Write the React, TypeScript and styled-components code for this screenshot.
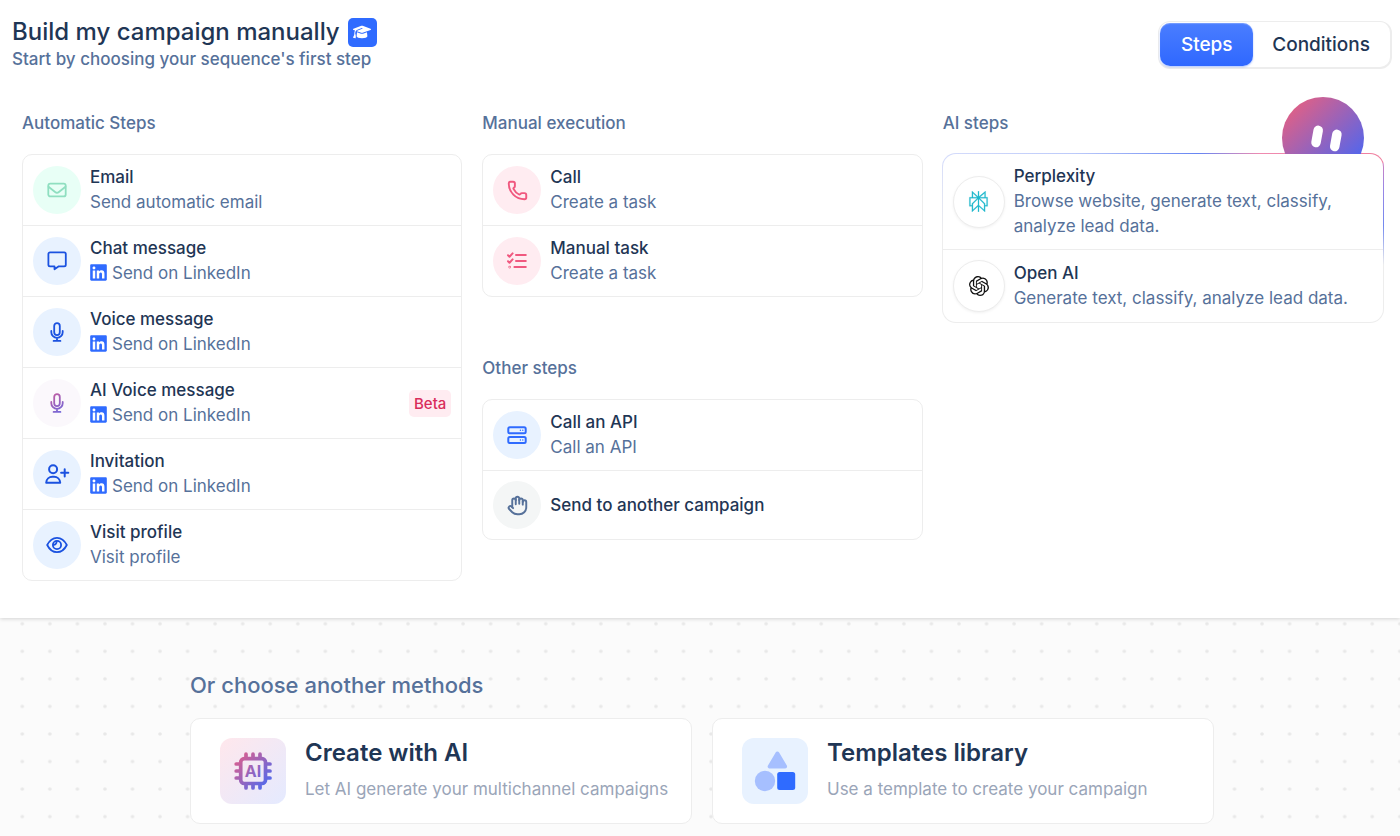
import React, { useState } from "react";
import styled, { createGlobalStyle, css } from "styled-components";
import { Hand, Phone } from "lucide-react";
import { FaGraduationCap, FaLinkedin } from "react-icons/fa6";
import { SiOpenai, SiPerplexity } from "react-icons/si";

const colors = {
  ink: "#1f3655",
  muted: "#56719a",
  faint: "#9aa5b8",
  line: "#ededed",
  primary: "#2f6bff",
};

const GlobalStyle = createGlobalStyle`
  *, *::before, *::after { box-sizing: border-box; }
  body {
    margin: 0;
    background: #fbfbfb;
    color: ${colors.ink};
    font-family: Inter, "Liberation Sans", sans-serif;
    font-size: 17px;
    line-height: 25px;
  }
  h1, h2, h3, p, ul { margin: 0; padding: 0; }
  button { font: inherit; color: inherit; cursor: pointer; }
`;

const Page = styled.div`
  display: flex;
  flex-direction: column;
  min-height: 100vh;
`;

const Panel = styled.main`
  position: relative;
  z-index: 1;
  padding-bottom: 37px;
  background: #fff;
  box-shadow: 0 1px 4px rgba(0, 0, 0, 0.16);
`;

const Header = styled.header`
  display: flex;
  justify-content: space-between;
  align-items: flex-start;
  padding: 17px 8px 0 12px;
`;

const TitleRow = styled.div`
  display: flex;
  align-items: center;
  gap: 8px;
`;

const Title = styled.h1`
  font-size: 24px;
  font-weight: 500;
  line-height: 30px;
`;

const HelpButton = styled.button`
  display: grid;
  place-items: center;
  width: 29px;
  height: 29px;
  padding: 0;
  border: 0;
  border-radius: 5px;
  background: ${colors.primary};
  color: #fff;
`;

const Subtitle = styled.p`
  font-weight: 500;
  color: ${colors.muted};
`;

const Toggle = styled.div`
  display: flex;
  margin-top: 4px;
  padding: 1px;
  border: 2px solid ${colors.line};
  border-width: 1px 2px 2px 1px;
  border-radius: 12px;
  background: #fff;
`;

const ToggleButton = styled.button<{ $active: boolean }>`
  min-width: 93px;
  height: 43px;
  padding: 0 19px;
  border: 0;
  border-radius: 10px;
  background: transparent;
  font-size: 19px;
  font-weight: 500;
  ${(p) =>
    p.$active &&
    css`
      background: linear-gradient(#4a7dff, #2f68ff);
      box-shadow: inset 0 1px 1px rgba(255, 255, 255, 0.25), 0 1px 2px rgba(47, 104, 255, 0.4);
      color: #fff;
    `}
`;

const Columns = styled.div`
  display: grid;
  grid-template-columns: repeat(3, minmax(0, 1fr));
  gap: 20px;
  align-items: start;
  padding: 25px 17px 0 22px;
`;

const Column = styled.div`
  display: flex;
  flex-direction: column;
`;

const Group = styled.section`
  & + & { margin-top: 45px; }
`;

const GroupHeader = styled.div`
  display: flex;
  justify-content: space-between;
  align-items: flex-end;
  min-height: 57px;
  padding-right: 19px;
`;

const GroupTitle = styled.h2`
  padding-bottom: 18px;
  font-size: 17px;
  font-weight: 500;
  color: ${colors.muted};
`;

const StepList = styled.ul<{ $glow?: boolean }>`
  list-style: none;
  border: 1px solid ${colors.line};
  border-radius: 10px;
  background: #fff;
  ${(p) =>
    p.$glow &&
    css`
      margin: -1px;
      border-color: transparent;
      border-radius: 14px;
      background:
        linear-gradient(#fff, #fff) padding-box,
        linear-gradient(90deg, #d5dcfb, #bccafa 30%, #6685f3 58%, #ef8bb0 72%, #f07f9f 97%) border-box left top / 100% 10px no-repeat,
        linear-gradient(#e57fb0, #9c86e4 30%, #7389ef 65%, ${colors.line}) border-box right top / 12px 112px no-repeat,
        linear-gradient(#d5dcfb, ${colors.line}) border-box left top / 12px 80px no-repeat,
        linear-gradient(${colors.line}, ${colors.line}) border-box;
    `}
`;

const StepItem = styled.li`
  & + & { border-top: 1px solid ${colors.line}; }
`;

const StepButton = styled.button`
  display: flex;
  align-items: center;
  gap: 9px;
  width: 100%;
  padding: 10px;
  border: 0;
  background: none;
  text-align: left;
`;

const tones = {
  green: { bg: "#e8fff6", fg: "#8fdfc0" },
  blue: { bg: "#e8f2ff", fg: "#1b52e0" },
  azure: { bg: "#e8f2ff", fg: "#2f6bff" },
  violet: { bg: "#fbf8fc", fg: "#9a63c0" },
  red: { bg: "#ffecf1", fg: "#f0587f" },
  grey: { bg: "#f4f6f6", fg: "#56719a" },
  teal: { bg: "#fff", fg: "#20b8cd" },
  black: { bg: "#fff", fg: "#111" },
};

type Tone = keyof typeof tones;

const StepIcon = styled.span<{ $tone: Tone; $ring?: boolean }>`
  display: grid;
  place-items: center;
  flex: none;
  width: ${(p) => (p.$ring ? 52 : 48)}px;
  height: ${(p) => (p.$ring ? 52 : 48)}px;
  border-radius: 50%;
  border: ${(p) => (p.$ring ? `1px solid ${colors.line}` : "0")};
  box-shadow: ${(p) => (p.$ring ? "0 1px 3px rgba(0, 0, 0, 0.06)" : "none")};
  background: ${(p) => tones[p.$tone].bg};
  color: ${(p) => tones[p.$tone].fg};
`;

const StepText = styled.span`
  display: flex;
  flex-direction: column;
  flex: 1;
  min-width: 0;
`;

const StepName = styled.span`
  font-weight: 500;
`;

const StepNote = styled.span`
  display: flex;
  align-items: center;
  gap: 5px;
  color: ${colors.muted};
`;

const LinkedInMark = styled(FaLinkedin)`
  flex: none;
  width: 17px;
  height: 19px;
  margin-bottom: 2px;
  color: ${colors.primary};
`;

const Badge = styled.span`
  padding: 1px 5px;
  border-radius: 5px;
  background: #ffecf1;
  color: #d92d5b;
  font-size: 15px;
  font-weight: 500;
`;

const Methods = styled.section`
  display: grid;
  flex: 1;
  background: #fbfbfb;
  & > * { grid-area: 1 / 1; }
`;

const Dots = styled.svg`
  width: 100%;
  height: 100%;
  min-height: 0;
`;

const MethodsBody = styled.div`
  z-index: 1;
  justify-self: center;
  width: 100%;
  max-width: 1028px;
  padding: 52px 0 12px 4px;
`;

const MethodsTitle = styled.h2`
  margin-bottom: 18px;
  font-size: 22px;
  font-weight: 500;
  line-height: 30px;
  color: ${colors.muted};
`;

const MethodGrid = styled.div`
  display: grid;
  grid-template-columns: repeat(2, minmax(0, 1fr));
  gap: 20px;
`;

const MethodCard = styled.button`
  display: flex;
  align-items: center;
  gap: 19px;
  padding: 19px 12px 19px 29px;
  border: 1px solid ${colors.line};
  border-radius: 10px;
  background: #fff;
  text-align: left;
`;

const MethodIcon = styled.span<{ $gradient?: boolean }>`
  flex: none;
  width: 66px;
  height: 66px;
  border-radius: 12px;
  background: ${(p) => (p.$gradient ? "linear-gradient(135deg, #ffe7ec, #e4eaff)" : "#e8f2ff")};
  & > svg { display: block; }
`;

const MethodText = styled.span`
  display: flex;
  flex-direction: column;
  gap: 9px;
  padding-bottom: 2px;
`;

const MethodName = styled.span`
  font-size: 24px;
  font-weight: 600;
  line-height: 30px;
`;

const MethodNote = styled.span`
  color: ${colors.faint};
`;

const Line = ({
  children,
  stroke = "currentColor",
  weight = 1.8,
}: {
  children: React.ReactNode;
  stroke?: string;
  weight?: number;
}) => (
  <svg
    width="24"
    height="24"
    viewBox="0 0 24 24"
    fill="none"
    stroke={stroke}
    strokeWidth={weight}
    strokeLinecap="round"
    strokeLinejoin="round"
    overflow="visible"
    aria-hidden
  >
    {children}
  </svg>
);

const MailIcon = () => (
  <Line>
    <rect x="3.3" y="5.6" width="17.4" height="12.8" rx="2" />
    <path d="M3.5 8.8l6.6 5.2a3 3 0 0 0 3.8 0l6.6-5.2" />
  </Line>
);

const ChatIcon = () => (
  <Line>
    <path d="M5 3.3h14.2a1.6 1.6 0 0 1 1.6 1.6v10.8a1.6 1.6 0 0 1-1.6 1.6h-5.4l-4.3 3v-3H5a1.6 1.6 0 0 1-1.6-1.6V4.9a1.6 1.6 0 0 1 1.6-1.6z" />
  </Line>
);

const micPaths = (
  <>
    <rect x="9.2" y="3.1" width="5.6" height="12" rx="2.8" />
    <path d="M6.3 11v1.2a5.7 5.7 0 0 0 11.4 0V11M12 17.900v3M8.6 20.900h6.8" />
  </>
);

const MicIcon = () => <Line>{micPaths}</Line>;

const AiMicIcon = () => (
  <Line stroke="url(#mic-tint)">
    <defs>
      <linearGradient id="mic-tint" gradientUnits="userSpaceOnUse" x1="5" y1="2" x2="19" y2="22">
        <stop stopColor="#c85a9c" />
        <stop offset="1" stopColor="#6a6ae0" />
      </linearGradient>
    </defs>
    {micPaths}
  </Line>
);

const InviteIcon = () => (
  <Line weight={2}>
    <circle cx="8.1" cy="7.2" r="4" />
    <path d="M1.2 20.7c.2-3.5 2.9-6 6.2-6h1.6c3.3 0 6 2.5 6.2 6zM19.7 7.2v7.2M16.1 10.8h7.2" />
  </Line>
);

const EyeIcon = () => (
  <Line>
    <path d="M2.2 12C4.2 8 7.5 4.8 12 4.8S19.8 8 21.8 12C19.8 16 16.5 19.2 12 19.2S4.2 16 2.2 12z" />
    <circle cx="12" cy="12" r="4.1" />
    <path d="M11.6 8.6a3 3 0 0 1-3 3.2" />
  </Line>
);

const TaskIcon = () => (
  <Line weight={2}>
    <path d="M3 6.2l1.5 1.5L7.6 4.4M3 12.2l1.5 1.5 3.1-3.3M11 6.1h9.8M11 12.1h9.8M9.4 18.1h11.4" />
    <circle cx="4.7" cy="18.1" r=".3" />
  </Line>
);

const ServerIcon = () => (
  <Line weight={2}>
    <rect x="3.3" y="4.2" width="17.4" height="6.1" rx="1.5" />
    <rect x="3.3" y="13.9" width="17.4" height="6.1" rx="1.5" />
    <path d="M15.4 7.25h.01M17.8 7.25h.01M15.4 16.95h.01M17.8 16.95h.01" strokeWidth="1.4" />
  </Line>
);

const Robot = () => (
  <svg width="82" height="57" viewBox="0 0 82 57" aria-hidden>
    <defs>
      <linearGradient id="robot-fill" gradientUnits="userSpaceOnUse" x1="14" y1="8" x2="72" y2="68">
        <stop stopColor="#dc6089" />
        <stop offset="1" stopColor="#5066ee" />
      </linearGradient>
    </defs>
    <circle cx="41" cy="41" r="41" fill="url(#robot-fill)" />
    <path d="M36.2 33.3l-2.2 12.2M54.9 37.3l-2.2 12.2" stroke="#fff" strokeWidth="9.5" strokeLinecap="round" />
  </svg>
);

const ChipIcon = () => (
  <svg width="66" height="66" viewBox="0 0 66 66" role="img" aria-label="AI">
    <defs>
      <linearGradient id="chip-tint" gradientUnits="userSpaceOnUse" x1="16" y1="18" x2="50" y2="50">
        <stop stopColor="#df5e8b" />
        <stop offset="1" stopColor="#466bf5" />
      </linearGradient>
    </defs>
    <g fill="none" stroke="url(#chip-tint)" strokeWidth="3.7" strokeLinecap="round">
      <rect x="20.7" y="20.7" width="24.8" height="24.8" rx="3.5" />
      <path d="M26 16.2v3M33 16.2v3M40 16.2v3M26 47v3M33 47v3M40 47v3M16.2 26h3M16.2 33h3M16.2 40h3M47 26h3M47 33h3M47 40h3" />
    </g>
    <text x="33" y="39" textAnchor="middle" fontFamily="Inter, sans-serif" fontSize="16" fontWeight="700" fill="url(#chip-tint)">
      AI
    </text>
  </svg>
);

const ShapesIcon = () => (
  <svg width="66" height="66" viewBox="0 0 66 66" aria-hidden>
    <path d="M35.4 15.5L27.7 28.5H43.1z" fill="#a6bfff" stroke="#a6bfff" strokeWidth="4" strokeLinejoin="round" />
    <circle cx="23" cy="43" r="10.2" fill="#a6bfff" />
    <rect x="35.2" y="34" width="18" height="18" rx="2.5" fill="#2f6bff" />
  </svg>
);

type Step = {
  name: string;
  note?: string;
  tone: Tone;
  icon: React.ReactNode;
  linkedin?: boolean;
  ring?: boolean;
  badge?: string;
};

const automatic: Step[] = [
  { name: "Email", note: "Send automatic email", tone: "green", icon: <MailIcon /> },
  { name: "Chat message", note: "Send on LinkedIn", linkedin: true, tone: "blue", icon: <ChatIcon /> },
  { name: "Voice message", note: "Send on LinkedIn", linkedin: true, tone: "blue", icon: <MicIcon /> },
  { name: "AI Voice message", note: "Send on LinkedIn", linkedin: true, tone: "violet", icon: <AiMicIcon />, badge: "Beta" },
  { name: "Invitation", note: "Send on LinkedIn", linkedin: true, tone: "blue", icon: <InviteIcon /> },
  { name: "Visit profile", note: "Visit profile", tone: "blue", icon: <EyeIcon /> },
];

const manual: Step[] = [
  { name: "Call", note: "Create a task", tone: "red", icon: <Phone size={21} strokeWidth={2.2} /> },
  { name: "Manual task", note: "Create a task", tone: "red", icon: <TaskIcon /> },
];

const other: Step[] = [
  { name: "Call an API", note: "Call an API", tone: "azure", icon: <ServerIcon /> },
  { name: "Send to another campaign", tone: "grey", icon: <Hand size={21} strokeWidth={2.2} /> },
];

const ai: Step[] = [
  {
    name: "Perplexity",
    note: "Browse website, generate text, classify, analyze lead data.",
    tone: "teal",
    ring: true,
    icon: <SiPerplexity size={21} stroke="currentColor" strokeWidth={0.3} />,
  },
  {
    name: "Open AI",
    note: "Generate text, classify, analyze lead data.",
    tone: "black",
    ring: true,
    icon: <SiOpenai size={20} />,
  },
];

const StepGroup = ({ title, steps, glow }: { title: string; steps: Step[]; glow?: boolean }) => (
  <Group>
    <GroupHeader>
      <GroupTitle>{title}</GroupTitle>
      {glow && <Robot />}
    </GroupHeader>
    <StepList $glow={glow}>
      {steps.map((step) => (
        <StepItem key={step.name}>
          <StepButton type="button">
            <StepIcon $tone={step.tone} $ring={step.ring}>
              {step.icon}
            </StepIcon>
            <StepText>
              <StepName>{step.name}</StepName>
              {step.note && (
                <StepNote>
                  {step.linkedin && <LinkedInMark aria-hidden />}
                  {step.note}
                </StepNote>
              )}
            </StepText>
            {step.badge && <Badge>{step.badge}</Badge>}
          </StepButton>
        </StepItem>
      ))}
    </StepList>
  </Group>
);

export default function App() {
  const [tab, setTab] = useState("Steps");

  return (
    <Page>
      <GlobalStyle />
      <Panel>
        <Header>
          <div>
            <TitleRow>
              <Title>Build my campaign manually</Title>
              <HelpButton type="button" aria-label="Open tutorial">
                <FaGraduationCap size={18} />
              </HelpButton>
            </TitleRow>
            <Subtitle>Start by choosing your sequence's first step</Subtitle>
          </div>
          <Toggle>
            {["Steps", "Conditions"].map((name) => (
              <ToggleButton
                key={name}
                type="button"
                aria-pressed={tab === name}
                $active={tab === name}
                onClick={() => setTab(name)}
              >
                {name}
              </ToggleButton>
            ))}
          </Toggle>
        </Header>
        <Columns>
          <Column>
            <StepGroup title="Automatic Steps" steps={automatic} />
          </Column>
          <Column>
            <StepGroup title="Manual execution" steps={manual} />
            <StepGroup title="Other steps" steps={other} />
          </Column>
          <Column>
            <StepGroup title="AI steps" steps={ai} glow />
          </Column>
        </Columns>
      </Panel>
      <Methods>
        <Dots aria-hidden>
          <defs>
            <pattern id="dots" patternUnits="userSpaceOnUse" x="8.5" y="-8" width="27.55" height="27.55">
              <circle cx="13.8" cy="13.8" r="1.8" fill="#e8e8e8" />
            </pattern>
          </defs>
          <rect width="100%" height="100%" fill="url(#dots)" />
        </Dots>
        <MethodsBody>
          <MethodsTitle>Or choose another methods</MethodsTitle>
          <MethodGrid>
            <MethodCard type="button">
              <MethodIcon $gradient>
                <ChipIcon />
              </MethodIcon>
              <MethodText>
                <MethodName>Create with AI</MethodName>
                <MethodNote>Let AI generate your multichannel campaigns</MethodNote>
              </MethodText>
            </MethodCard>
            <MethodCard type="button">
              <MethodIcon>
                <ShapesIcon />
              </MethodIcon>
              <MethodText>
                <MethodName>Templates library</MethodName>
                <MethodNote>Use a template to create your campaign</MethodNote>
              </MethodText>
            </MethodCard>
          </MethodGrid>
        </MethodsBody>
      </Methods>
    </Page>
  );
}
